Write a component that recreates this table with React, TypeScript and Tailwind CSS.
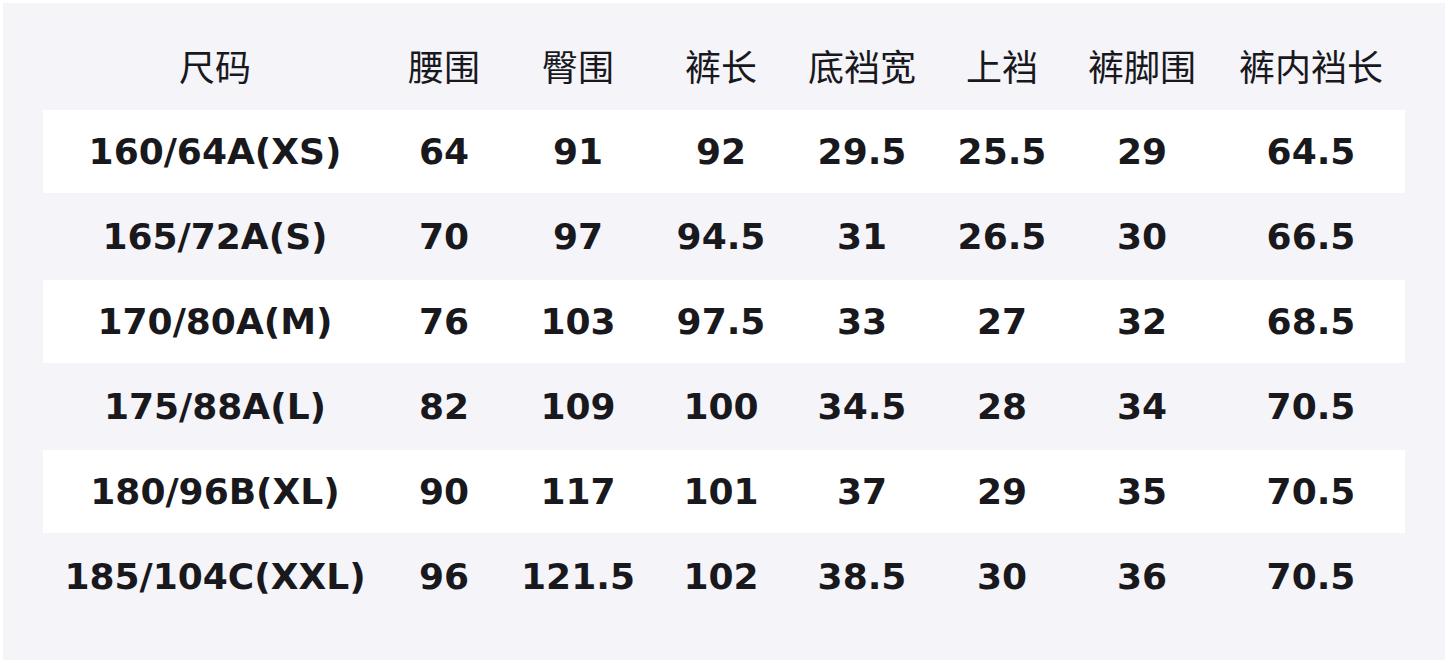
import React from 'react';

const headers = ['尺码', '腰围', '臀围', '裤长', '底裆宽', '上裆', '裤脚围', '裤内裆长'];

const rows: string[][] = [
  ['160/64A(XS)', '64', '91', '92', '29.5', '25.5', '29', '64.5'],
  ['165/72A(S)', '70', '97', '94.5', '31', '26.5', '30', '66.5'],
  ['170/80A(M)', '76', '103', '97.5', '33', '27', '32', '68.5'],
  ['175/88A(L)', '82', '109', '100', '34.5', '28', '34', '70.5'],
  ['180/96B(XL)', '90', '117', '101', '37', '29', '35', '70.5'],
  ['185/104C(XXL)', '96', '121.5', '102', '38.5', '30', '36', '70.5'],
];

const cols = 'grid grid-cols-[344px_114px_154px_132px_150px_130px_150px_188px]';

export default function App() {
  return (
    <div className="w-[1448px] h-[663px] bg-white p-[3px]">
      <div className="h-[657px] bg-[#f4f4f9] px-[40px] pt-[22px] text-[#18181d]">
        {/* header */}
        <div
          className={`${cols} h-[85px] items-center pb-[6px] text-[36px] font-normal`}
          style={{ fontFamily: '"Noto Sans CJK SC", "Noto Sans", sans-serif' }}
        >
          {headers.map((h) => (
            <div key={h} className="text-center leading-none">
              {h}
            </div>
          ))}
        </div>

        {/* body */}
        {rows.map((r, i) => (
          <div
            key={r[0]}
            className={`${cols} items-center text-[36px] font-bold ${
              i % 2 === 0 ? 'bg-white h-[83px]' : 'h-[87px]'
            }`}
            style={{ fontFamily: '"DejaVu Sans", sans-serif' }}
          >
            {r.map((c, j) => (
              <div key={j} className="text-center leading-none">
                {c}
              </div>
            ))}
          </div>
        ))}
      </div>
    </div>
  );
}
